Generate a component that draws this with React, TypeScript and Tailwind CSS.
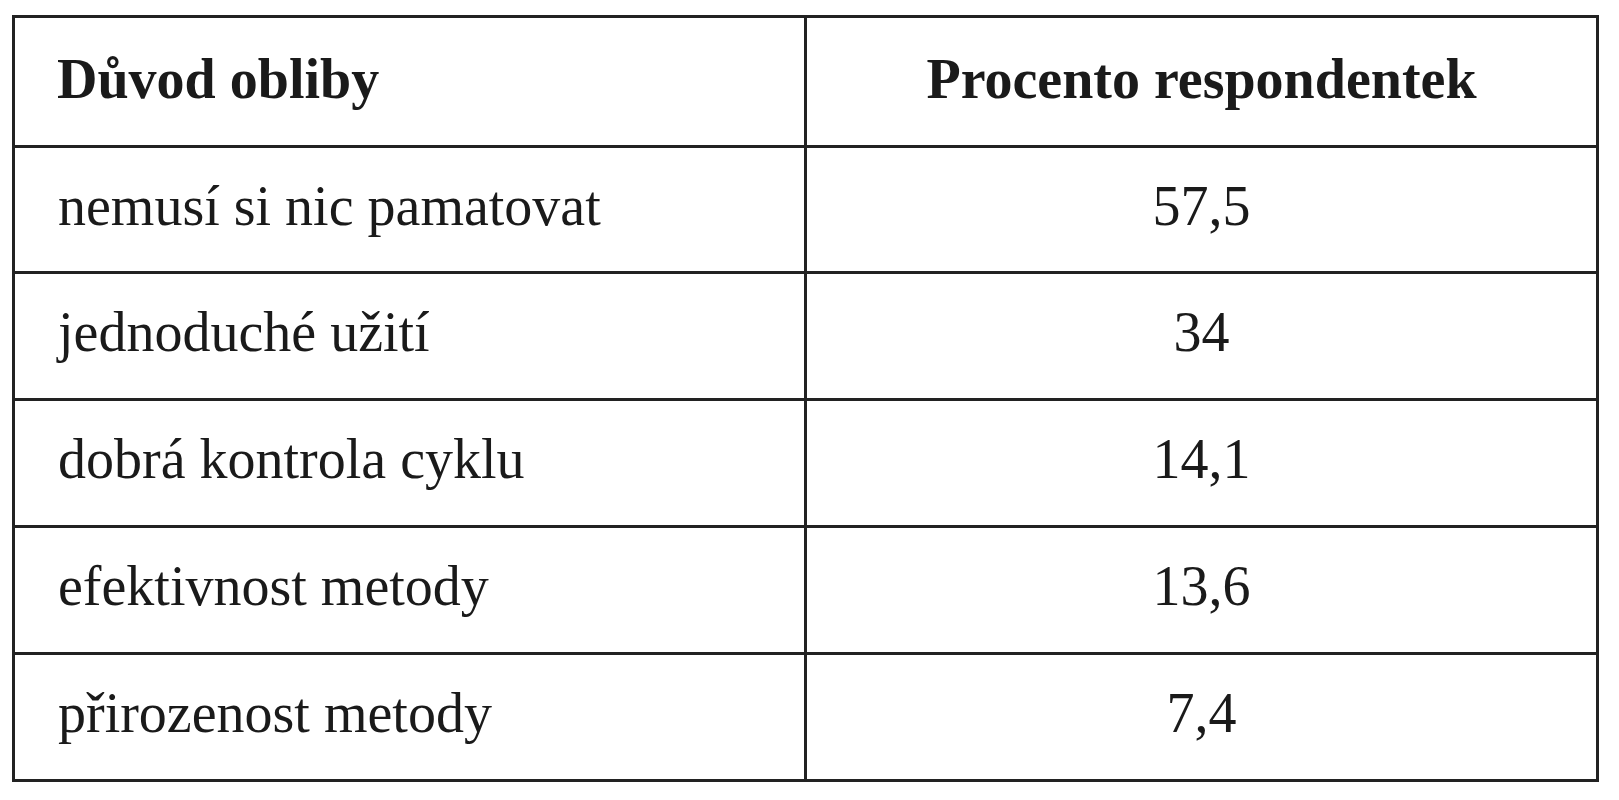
const rows: [string, string][] = [
  ['nemusí si nic pamatovat', '57,5'],
  ['jednoduché užití', '34'],
  ['dobrá kontrola cyklu', '14,1'],
  ['efektivnost metody', '13,6'],
  ['přirozenost metody', '7,4'],
]

export default function App() {
  return (
    <div className="min-h-screen bg-white pt-[15px] pl-[12px] font-['Liberation_Serif','Times_New_Roman',serif] text-[#1a1a1a]">
      <div className="w-[1587px] border-[3px] border-[#222]">
        <div className="grid grid-cols-[789px_3px_789px] h-[127px] items-center">
          <div className="pl-[42px] pb-[6px] text-[56px] font-bold">Důvod obliby</div>
          <div className="h-full bg-[#222]" />
          <div className="pb-[6px] text-center text-[56px] font-bold">Procento respondentek</div>
        </div>
        {rows.map(([reason, pct], i) => (
          <div
            key={reason}
            className={`grid grid-cols-[789px_3px_789px] items-center border-t-[3px] border-[#222] ${i === 0 ? 'h-[126px]' : 'h-[127px]'}`}
          >
            <div className="pl-[43px] pb-[8px] text-[56px]">{reason}</div>
            <div className="h-full bg-[#222]" />
            <div className="pb-[8px] text-center text-[56px]">{pct}</div>
          </div>
        ))}
      </div>
    </div>
  )
}
